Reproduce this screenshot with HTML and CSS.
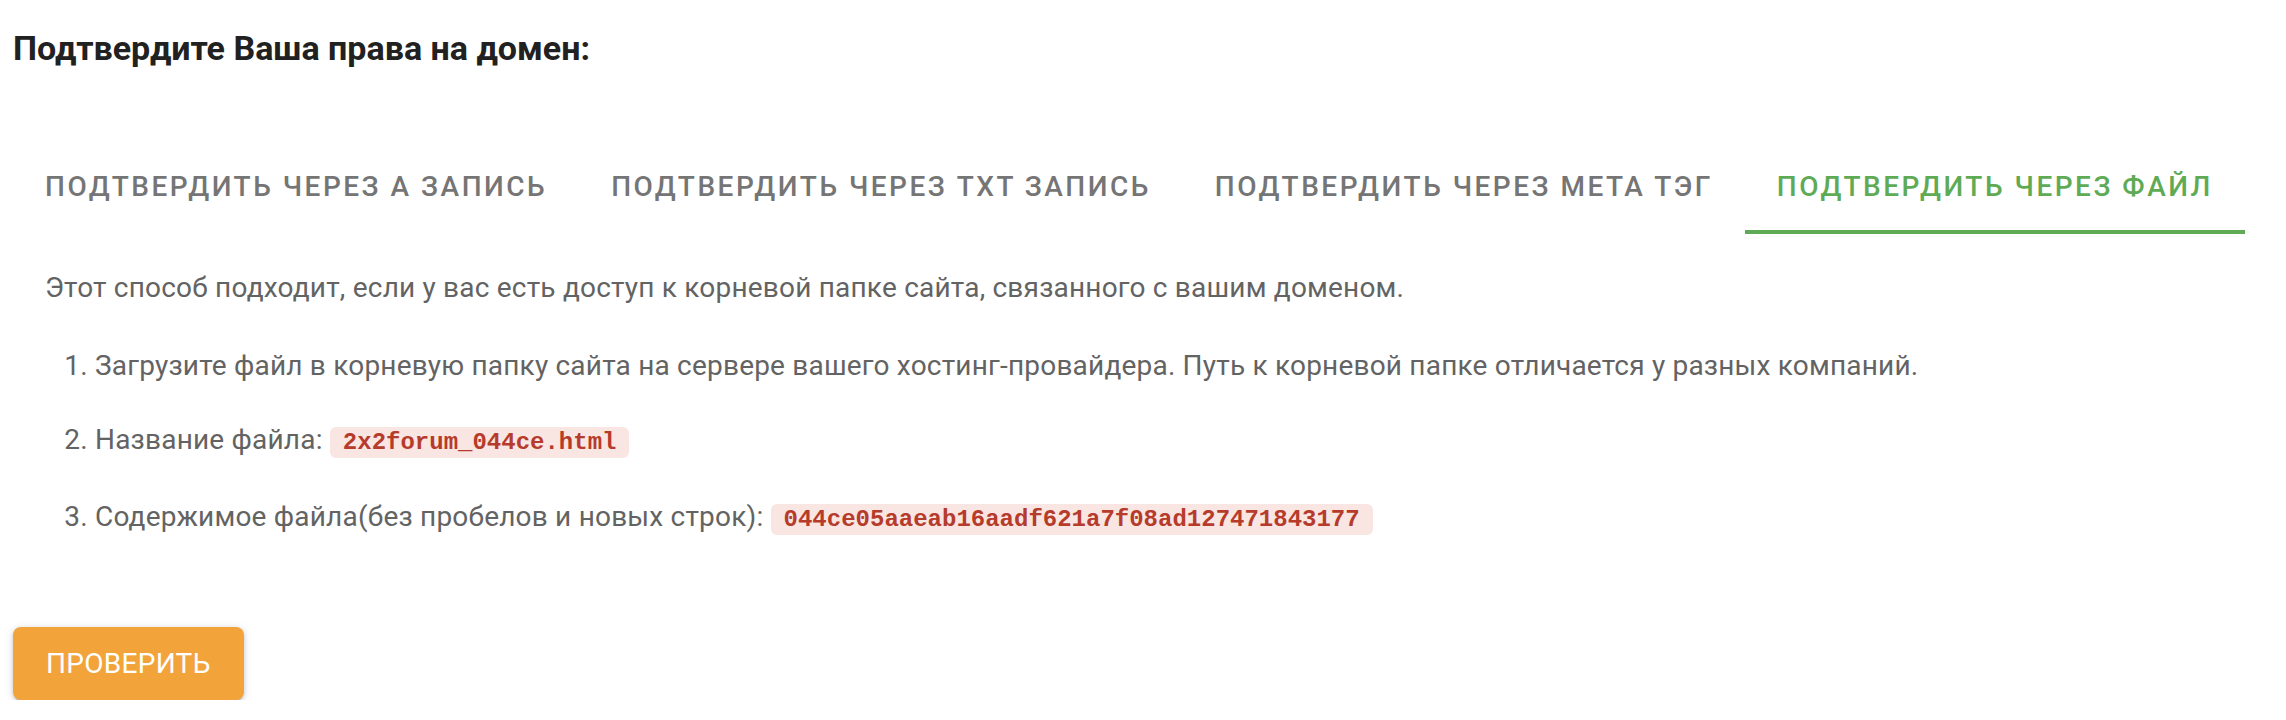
FILE: index.html
```html
<!DOCTYPE html>
<html lang="ru">
<head>
<meta charset="utf-8">
<title>Подтвердите Ваша права на домен</title>
<link rel="stylesheet" href="styles.css">
</head>
<body>
<div class="page">
  <h2 class="title">Подтвердите Ваша права на домен:</h2>
  <div class="tabs">
    <div class="tab">Подтвердить через A запись</div>
    <div class="tab">Подтвердить через TXT запись</div>
    <div class="tab">Подтвердить через мета тэг</div>
    <div class="tab active">Подтвердить через файл</div>
  </div>
  <div class="panel">
    <p class="lead">Этот способ подходит, если у вас есть доступ к корневой папке сайта, связанного с вашим доменом.</p>
    <ol class="steps">
      <li>Загрузите файл в корневую папку сайта на сервере вашего хостинг-провайдера. Путь к корневой папке отличается у разных компаний.</li>
      <li>Название файла: <code class="code">2x2forum_044ce.html</code></li>
      <li>Содержимое файла(без пробелов и новых строк): <code class="code">044ce05aaeab16aadf621a7f08ad127471843177</code></li>
    </ol>
  </div>
  <button class="btn" type="button">Проверить</button>
</div>
</body>
</html>
```

FILE: styles.css
```css
html, body {
  margin: 0;
  padding: 0;
  background: #ffffff;
}
body {
  font-family: Roboto, "Noto Sans", "Liberation Sans", sans-serif;
}
.page {
  padding: 0 13px;
}
.title {
  margin: 0;
  padding-top: 28px;
  font-size: 34px;
  line-height: 40px;
  font-weight: 700;
  color: #212121;
}
.tabs {
  display: flex;
  margin-top: 70px;
}
.tab {
  height: 96px;
  box-sizing: border-box;
  padding: 4px 32px 0;
  display: flex;
  align-items: center;
  font-size: 28px;
  font-weight: 500;
  letter-spacing: 2.5px;
  text-transform: uppercase;
  color: #757575;
  border-bottom: 4px solid transparent;
}
.tab.active {
  color: #5fab55;
  border-bottom-color: #5fab55;
}
.panel {
  padding: 0 32px;
  color: #636363;
  font-size: 28px;
  line-height: 38px;
  letter-spacing: 0.2px;
}
.lead {
  margin: 35px 0 0;
}
.steps {
  margin: 40px 0 0;
  padding-left: 50px;
  display: flex;
  flex-direction: column;
  gap: 36px;
}
.code {
  font-family: "Liberation Mono", "Courier New", monospace;
  font-weight: 700;
  font-size: 24px;
  letter-spacing: 0;
  color: #b63b2b;
  background: #f9e6e3;
  border-radius: 6px;
  padding: 2px 13px;
}
.btn {
  display: block;
  margin-top: 88px;
  height: 73px;
  padding: 0 33px;
  border: none;
  border-radius: 8px;
  background: #f2a43a;
  color: #ffffff;
  font-family: Roboto, "Noto Sans", sans-serif;
  font-size: 28px;
  font-weight: 400;
  letter-spacing: 0.3px;
  text-transform: uppercase;
  box-shadow: 0 3px 2px -2px rgba(0,0,0,0.2), 0 2px 4px 0 rgba(0,0,0,0.14), 0 1px 10px 0 rgba(0,0,0,0.12);
}
```
